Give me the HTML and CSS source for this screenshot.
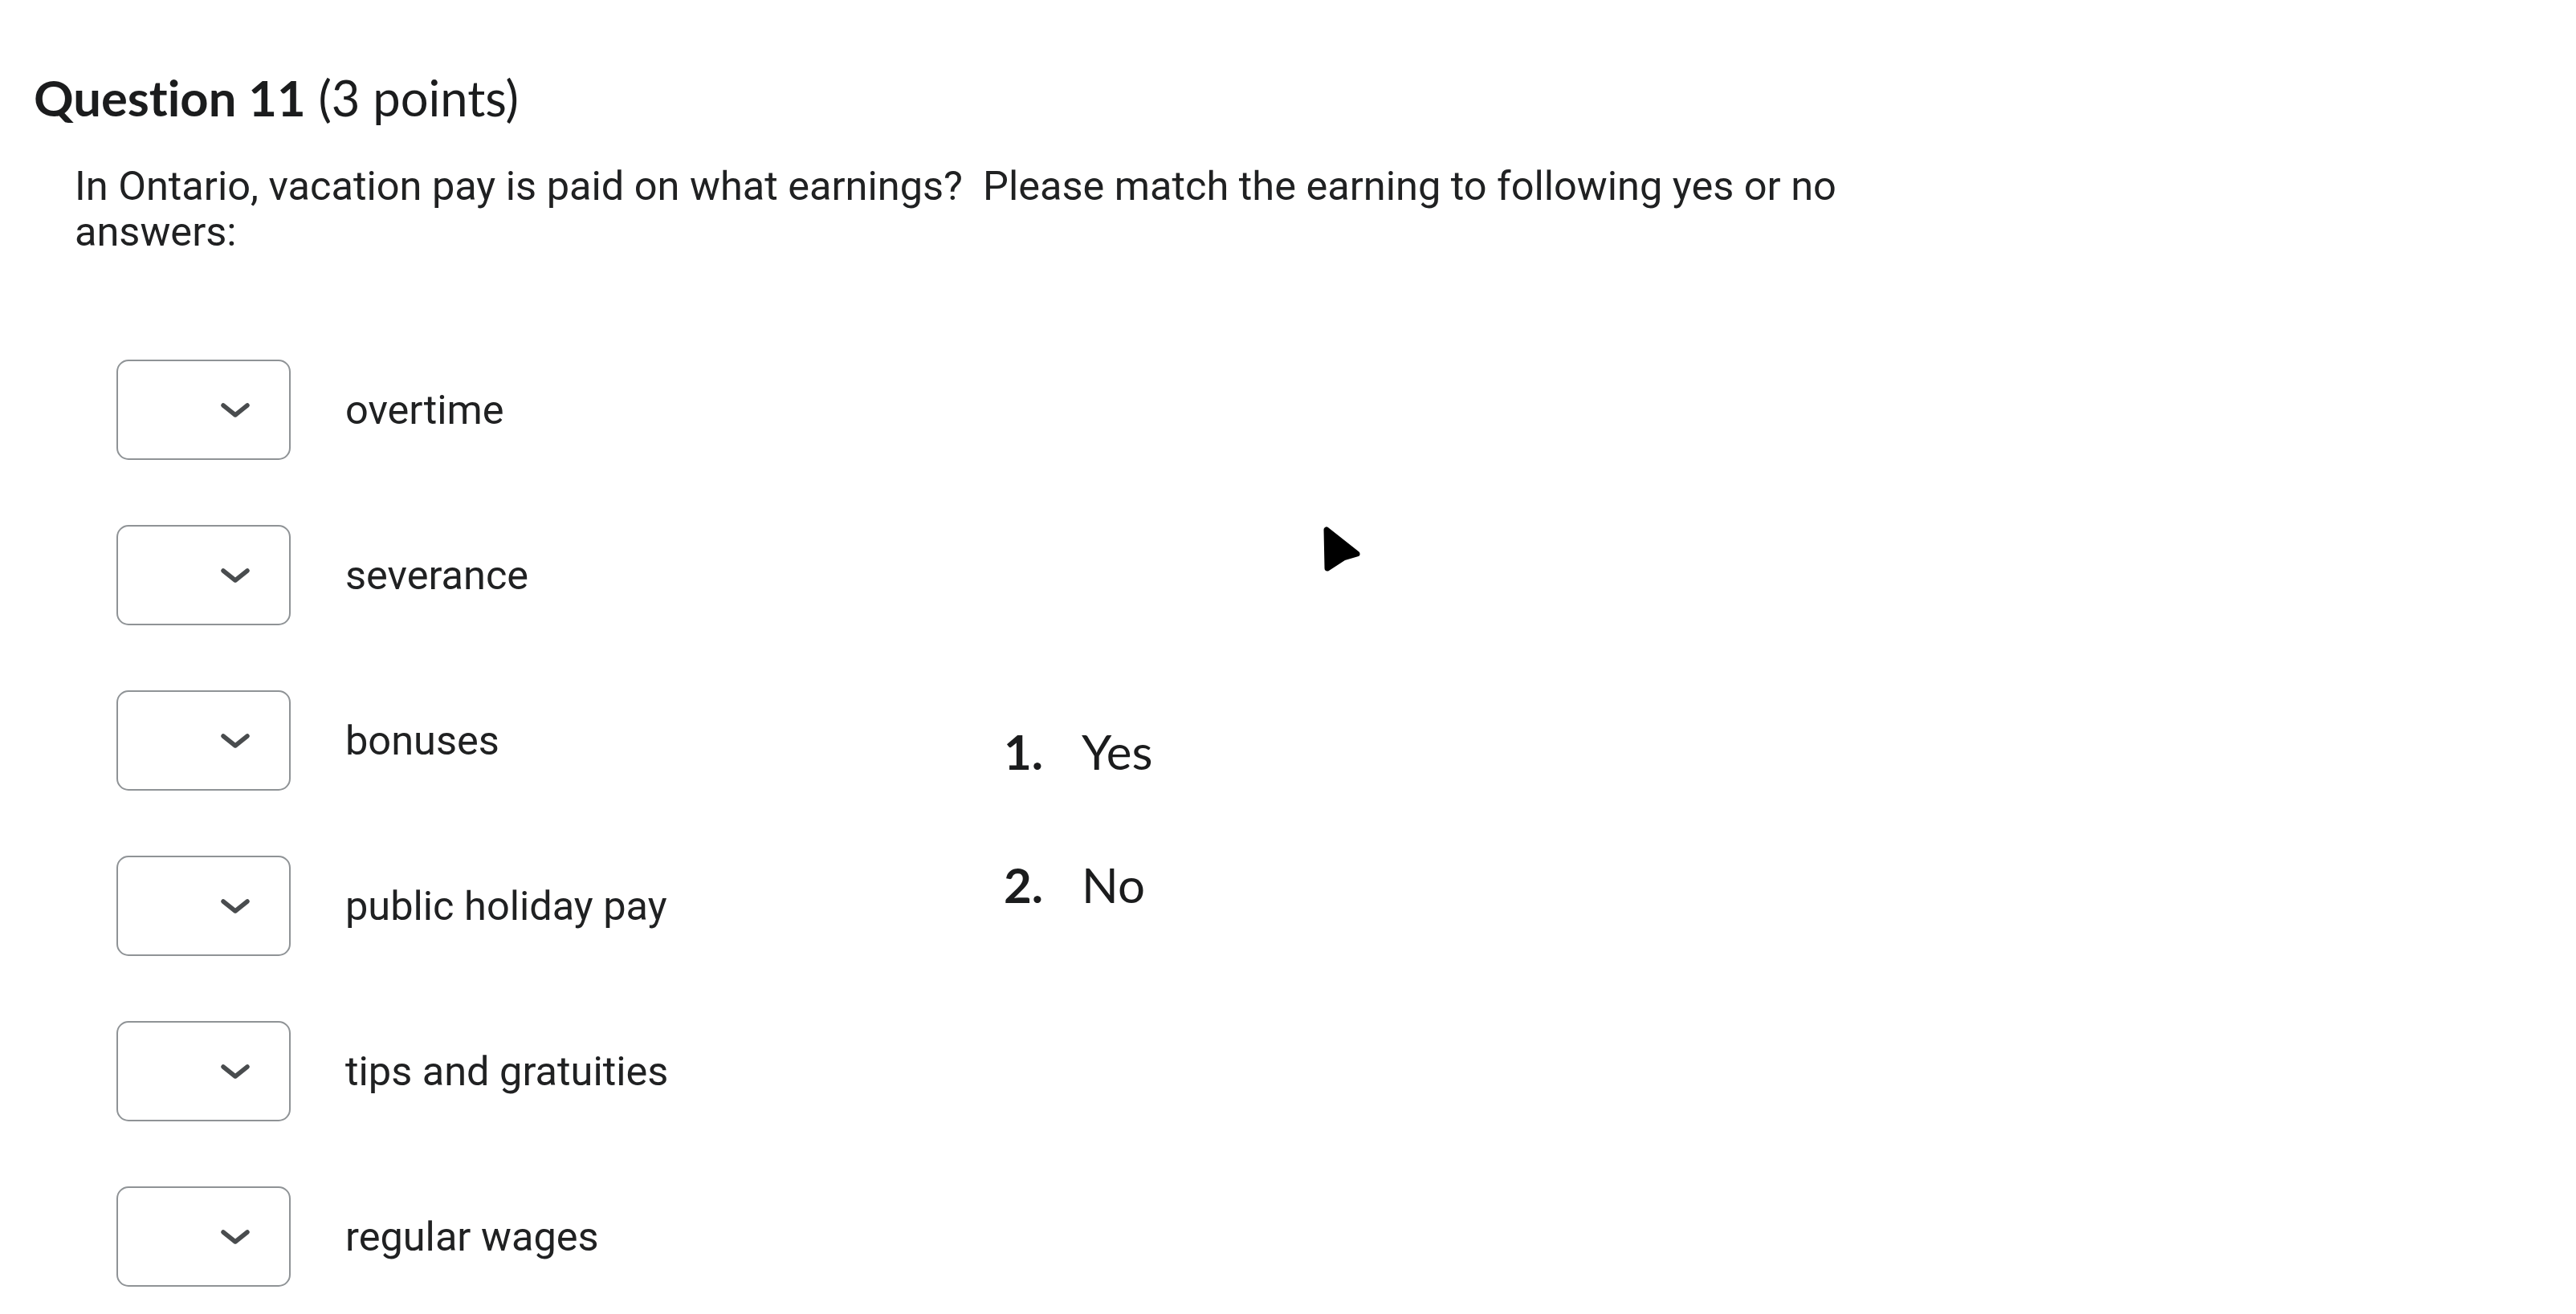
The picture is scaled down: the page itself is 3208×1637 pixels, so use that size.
FILE: index.html
```html
<!DOCTYPE html>
<html lang="en">
<head>
<meta charset="utf-8">
<title>Question 11</title>
<link rel="stylesheet" href="styles.css">
</head>
<body>
<main class="page">
  <h2 class="title"><strong>Question 11</strong> (3 points)</h2>
  <p class="prompt">In Ontario, vacation pay is paid on what earnings?&nbsp; Please match the earning to following yes or no answers:</p>
  <div class="match">
    <div class="choices">
      <div class="row">
        <div class="select"><svg class="chev" viewBox="0 0 36 18"><path d="M3 3 L18 15 L33 3"/></svg></div>
        <span class="label">overtime</span>
      </div>
      <div class="row">
        <div class="select"><svg class="chev" viewBox="0 0 36 18"><path d="M3 3 L18 15 L33 3"/></svg></div>
        <span class="label">severance</span>
      </div>
      <div class="row">
        <div class="select"><svg class="chev" viewBox="0 0 36 18"><path d="M3 3 L18 15 L33 3"/></svg></div>
        <span class="label">bonuses</span>
      </div>
      <div class="row">
        <div class="select"><svg class="chev" viewBox="0 0 36 18"><path d="M3 3 L18 15 L33 3"/></svg></div>
        <span class="label">public holiday pay</span>
      </div>
      <div class="row">
        <div class="select"><svg class="chev" viewBox="0 0 36 18"><path d="M3 3 L18 15 L33 3"/></svg></div>
        <span class="label">tips and gratuities</span>
      </div>
      <div class="row">
        <div class="select"><svg class="chev" viewBox="0 0 36 18"><path d="M3 3 L18 15 L33 3"/></svg></div>
        <span class="label">regular wages</span>
      </div>
    </div>
    <ol class="answers">
      <li class="answer"><span class="num">1.</span><span class="atext">Yes</span></li>
      <li class="answer"><span class="num">2.</span><span class="atext">No</span></li>
    </ol>
  </div>
</main>
<svg class="cursor" viewBox="0 0 60 70" width="60" height="70">
  <path d="M12 10 L13 58 L33 45 L50 40 Z"/>
</svg>
</body>
</html>
```

FILE: styles.css
```css
html, body {
  margin: 0;
  padding: 0;
  background: #ffffff;
}

body {
  font-family: Roboto, "Liberation Sans", sans-serif;
  color: #202122;
  width: 3208px;
  height: 1637px;
  overflow: hidden;
  position: relative;
  font-variant-ligatures: none;
}

.page {
  padding: 85px 0 0 0;
}

.title {
  margin: 0;
  padding-left: 42px;
  font-family: Lato, "Liberation Sans", sans-serif;
  font-size: 61.5px;
  line-height: 72px;
  font-weight: 400;
  color: #1b1c1d;
}

.title strong {
  font-weight: 700;
}

.prompt {
  margin: 46px 0 0 0;
  padding-left: 93px;
  width: 2230px;
  font-size: 50.5px;
  line-height: 57px;
}

.match {
  margin-top: 131px;
  padding-left: 145px;
  display: flex;
  align-items: center;
}

.choices {
  width: 1105px;
  display: flex;
  flex-direction: column;
  gap: 81px;
}

.row {
  display: flex;
  align-items: center;
  gap: 68px;
  height: 125px;
}

.select {
  box-sizing: border-box;
  width: 217px;
  height: 125px;
  border: 2px solid #8f9396;
  border-radius: 15px;
  background: #fff;
  display: flex;
  align-items: center;
  justify-content: flex-end;
  padding-right: 49px;
}

.chev {
  width: 36px;
  height: 18px;
  fill: none;
  stroke: #494c4e;
  stroke-width: 5.5;
  stroke-linecap: round;
  stroke-linejoin: round;
}

.label {
  font-size: 50.5px;
  line-height: 57px;
  white-space: nowrap;
}

.answers {
  list-style: none;
  margin: 0 0 14px 0;
  padding: 0;
  display: flex;
  flex-direction: column;
  gap: 94px;
  font-family: Lato, "Liberation Sans", sans-serif;
  font-size: 60px;
  line-height: 72px;
  color: #1b1c1d;
}

.answer {
  display: flex;
}

.num {
  width: 97px;
  font-weight: 700;
}

.cursor {
  position: absolute;
  left: 1640px;
  top: 650px;
}

.cursor path {
  fill: #000;
  stroke: #000;
  stroke-width: 7;
  stroke-linejoin: round;
}
```
